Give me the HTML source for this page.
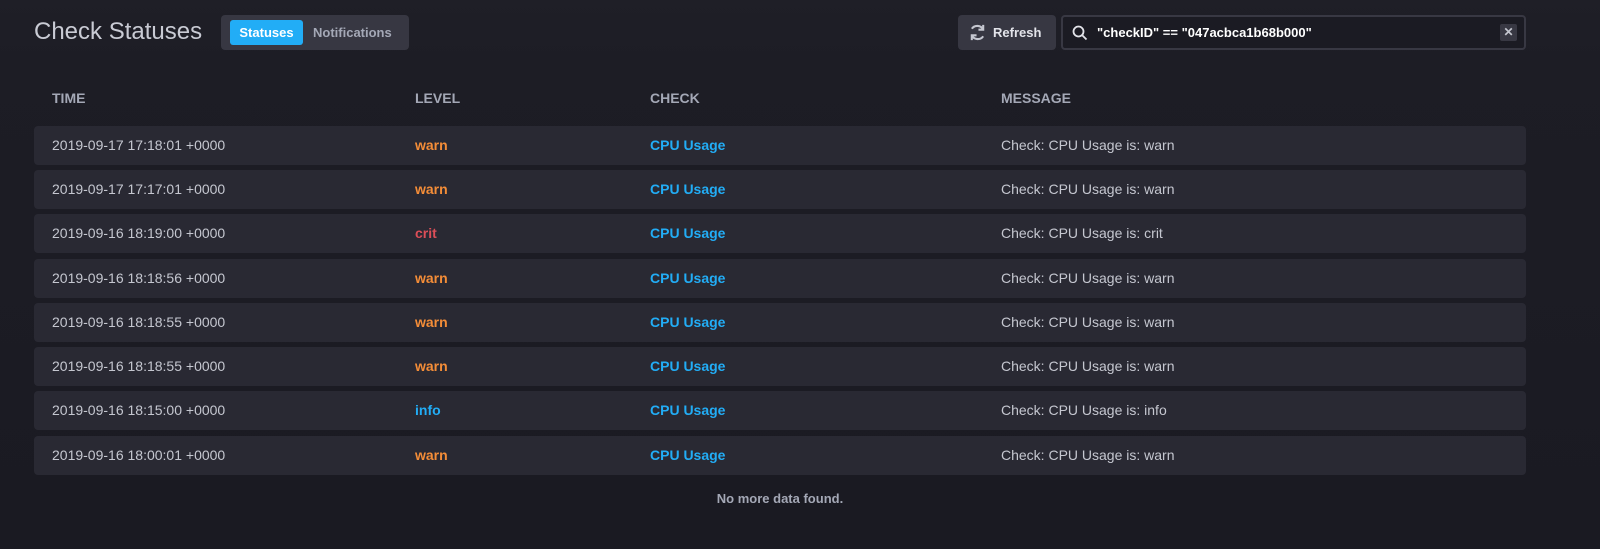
<!DOCTYPE html>
<html><head><meta charset="utf-8"><style>
*{box-sizing:border-box;margin:0;padding:0}
body{width:1600px;height:549px;background:linear-gradient(#1f1f27 0,#1d1d25 60px,#1a1a22 549px);font-family:"Liberation Sans",sans-serif;overflow:hidden;position:relative;color:#c5c7d0}
.title{position:absolute;left:34px;top:18px;font-size:24px;color:#c9cbd4;font-weight:normal}
.tog{position:absolute;left:221px;top:15px;width:188px;height:35px;background:#373742;border-radius:4px}
.tog .a{position:absolute;left:9px;top:5px;width:73px;height:25px;background:#22adf6;border-radius:3px;color:#fff;font-weight:bold;font-size:13px;text-align:center;line-height:25px}
.tog .b{position:absolute;left:92px;top:5px;height:25px;line-height:25px;color:#a4a8b6;font-weight:bold;font-size:13px}
.ref{position:absolute;left:958px;top:15px;width:98px;height:35px;background:#373742;border-radius:4px;color:#e3e4ea;font-weight:bold;font-size:13px;line-height:35px;padding-left:35px}
.ref svg{position:absolute;left:10px;top:8px}
.search{position:absolute;left:1061px;top:15px;width:465px;height:35px;border:2px solid #383843;border-radius:4px;background:#1b1b23;color:#fff;font-size:13px;font-weight:bold;line-height:31px;padding-left:34px}
.search svg{position:absolute;left:9px;top:8px}
.x{position:absolute;right:7px;top:7px;width:17px;height:17px;background:#383843;border-radius:2px;color:#c5c7d0;font-size:12px;line-height:17px;text-align:center}
.hd{position:absolute;top:90px;font-size:14px;font-weight:bold;color:#a4a8b6}
.row{position:absolute;left:34px;width:1492px;height:39px;background:#292933;border-radius:4px;font-size:14px;line-height:39px}
.row span{position:absolute}
.t{left:18px;color:#c5c7d0}
.l{left:381px;font-weight:bold}
.c{left:616px;font-weight:bold;color:#22adf6}
.m{left:967px;color:#c5c7d0}
.warn{color:#f48d38}.crit{color:#dc4e58}.info{color:#22adf6}
.nm{position:absolute;top:491px;left:0;width:1560px;text-align:center;font-size:13px;font-weight:bold;color:#a4a8b6}
</style></head><body>
<div class="title">Check Statuses</div>
<div class="tog"><div class="a">Statuses</div><div class="b">Notifications</div></div>
<div class="ref"><svg width="19" height="19" viewBox="0 0 20 20" fill="none" stroke="#c5c7d0" stroke-width="2.2"><path d="M16 7A7 7 0 0 0 4 6"/><path d="M4 13A7 7 0 0 0 16 14"/><path d="M16 2v5h-5" /><path d="M4 18v-5h5"/></svg>Refresh</div>
<div class="search"><svg width="16" height="16" viewBox="0 0 16 16" fill="none" stroke="#e3e4ea" stroke-width="1.8"><circle cx="6.5" cy="6.5" r="5"/><path d="M10.5 10.5l4 4"/></svg>"checkID" == "047acbca1b68b000"<div class="x">✕</div></div>
<div class="hd" style="left:52px">TIME</div>
<div class="hd" style="left:415px">LEVEL</div>
<div class="hd" style="left:650px">CHECK</div>
<div class="hd" style="left:1001px">MESSAGE</div>
<div class="row" style="top:126px"><span class="t">2019-09-17 17:18:01 +0000</span><span class="l warn">warn</span><span class="c">CPU Usage</span><span class="m">Check: CPU Usage is: warn</span></div>
<div class="row" style="top:170px"><span class="t">2019-09-17 17:17:01 +0000</span><span class="l warn">warn</span><span class="c">CPU Usage</span><span class="m">Check: CPU Usage is: warn</span></div>
<div class="row" style="top:214px"><span class="t">2019-09-16 18:19:00 +0000</span><span class="l crit">crit</span><span class="c">CPU Usage</span><span class="m">Check: CPU Usage is: crit</span></div>
<div class="row" style="top:259px"><span class="t">2019-09-16 18:18:56 +0000</span><span class="l warn">warn</span><span class="c">CPU Usage</span><span class="m">Check: CPU Usage is: warn</span></div>
<div class="row" style="top:303px"><span class="t">2019-09-16 18:18:55 +0000</span><span class="l warn">warn</span><span class="c">CPU Usage</span><span class="m">Check: CPU Usage is: warn</span></div>
<div class="row" style="top:347px"><span class="t">2019-09-16 18:18:55 +0000</span><span class="l warn">warn</span><span class="c">CPU Usage</span><span class="m">Check: CPU Usage is: warn</span></div>
<div class="row" style="top:391px"><span class="t">2019-09-16 18:15:00 +0000</span><span class="l info">info</span><span class="c">CPU Usage</span><span class="m">Check: CPU Usage is: info</span></div>
<div class="row" style="top:436px"><span class="t">2019-09-16 18:00:01 +0000</span><span class="l warn">warn</span><span class="c">CPU Usage</span><span class="m">Check: CPU Usage is: warn</span></div>
<div class="nm">No more data found.</div>
</body></html>
